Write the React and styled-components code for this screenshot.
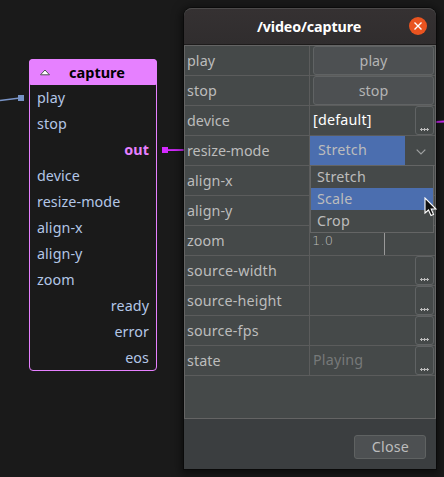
import React from "react";
import styled, { createGlobalStyle } from "styled-components";

const GlobalStyle = createGlobalStyle`
  * { box-sizing: border-box; }
  body {
    margin: 0;
    background: #1a1a1a;
    font-family: "Noto Sans", "Open Sans", sans-serif;
    font-size: 15px;
  }
`;

const Canvas = styled.main`
  position: relative;
  width: 444px;
  height: 477px;
  overflow: hidden;
  background: #1a1a1a;
`;

const Wires = styled.svg`
  position: absolute;
  inset: 0;
`;

const Node = styled.section`
  position: absolute;
  left: 29px;
  top: 59px;
  width: 128px;
  height: 312px;
  border: 1px solid #e680ff;
  border-radius: 4px;
  color: #b3c6e6;
`;

const NodeHeader = styled.header`
  position: relative;
  display: flex;
  align-items: center;
  justify-content: center;
  height: 26px;
  margin: -1px -1px 0;
  padding: 0 0 1px 8px;
  background: #e680ff;
  border-radius: 4px 4px 2px 2px;
  color: #000;
  font-weight: 700;
  font-size: 14.5px;
`;

const Collapse = styled.svg`
  position: absolute;
  left: 10px;
  top: 9px;
`;

const Port = styled.div`
  display: flex;
  align-items: center;
  justify-content: ${(p) => (p.$out ? "flex-end" : "flex-start")};
  height: 26px;
  padding: 0 7px;
  line-height: 26px;
  font-size: 14.3px;
  letter-spacing: 0.08px;
  ${(p) => p.$active && "color: #e680ff; font-weight: 700;"}
`;

const Dialog = styled.section`
  position: absolute;
  left: 184px;
  top: 8px;
  width: 252px;
  height: 461px;
  display: flex;
  flex-direction: column;
  background: #3b3e40;
  border-radius: 8px 8px 0 0;
  box-shadow: 0 2px 10px 3px rgba(0, 0, 0, 0.5), 0 0 0 1px rgba(0, 0, 0, 0.35);
  color: #bcbcbc;
`;

const TitleBar = styled.header`
  position: relative;
  display: flex;
  align-items: center;
  justify-content: center;
  height: 37px;
  flex: none;
  padding-right: 2px;
  background: linear-gradient(#353132, #302d2e);
  border-top: 1px solid #4c4a4a;
  border-bottom: 1px solid #1e1c1c;
  border-radius: 8px 8px 0 0;
  color: #fff;
  font-weight: 700;
  font-size: 14.3px;
  letter-spacing: -0.12px;
`;

const CloseIcon = styled.svg`
  position: absolute;
  right: 9px;
  top: 8px;
`;

const Table = styled.div`
  height: 374px;
  flex: none;
  background: #454949;
  border: 1px solid #646464;
`;

const Row = styled.div`
  display: grid;
  grid-template-columns: 125px 1fr;
  height: 30px;
  border-bottom: 1px solid #5b5c5c;
`;

const Name = styled.div`
  padding-left: 2px;
  border-right: 1px solid #5b5c5c;
  line-height: 29px;
  font-size: 14.3px;
  letter-spacing: ${(p) => p.$spacing}px;
  white-space: nowrap;
`;

const Value = styled.div`
  position: relative;
  display: flex;
  justify-content: space-between;
  padding-right: 1px;
  padding-left: 3px;
  font-size: 14.3px;
  letter-spacing: 0.2px;
  line-height: 27px;
  color: ${(p) => p.$color || "#bcbcbc"};
`;

const PushButton = styled.button`
  flex: 1;
  height: 29px;
  padding: 0 0 3px;
  font: inherit;
  color: #b4b4b4;
  background: #4d5052;
  border: 1px solid #606364;
  border-radius: 3px;
`;

const MoreButton = styled.button`
  display: flex;
  align-items: flex-end;
  justify-content: center;
  width: 19px;
  height: 29px;
  padding: 0 0 3px;
  background: transparent;
  border: 1px solid #606364;
  border-radius: 3px;
`;

const Combo = styled.div`
  display: flex;
  align-items: center;
  justify-content: space-between;
  flex: 1;
  margin-left: -3px;
`;

const Selection = styled.div`
  width: 95px;
  height: 29px;
  padding-left: 8px;
  line-height: 27px;
  background: #4b6eaf;
`;

const Chevron = styled.svg`
  margin: 3px 8px 0 0;
`;

const Menu = styled.div`
  position: absolute;
  z-index: 2;
  left: 0;
  top: 29px;
  width: 124px;
  height: 68px;
  background: #454949;
  border: 1px solid #646565;
`;

const MenuItem = styled.div`
  height: 22px;
  padding-left: 6px;
  line-height: 21px;
  background: ${(p) => (p.$selected ? "#4b6eaf" : "transparent")};
`;

const ZoomField = styled.div`
  width: 73px;
  height: 29px;
  margin-left: -1px;
  border-right: 1px solid #999;
  font-family: "DejaVu Sans", sans-serif;
  font-weight: 200;
  font-size: 13px;
  line-height: 29px;
`;

const Footer = styled.footer`
  display: flex;
  align-items: flex-start;
  justify-content: flex-end;
  padding: 16px 10px 0 0;
`;

const CloseButton = styled.button`
  width: 72px;
  height: 24px;
  padding: 0 0 0 1px;
  font: inherit;
  font-size: 14.3px;
  letter-spacing: 0.2px;
  line-height: 20px;
  color: #bcbcbc;
  background: #4d5052;
  border: 1px solid #5f6262;
  border-radius: 3px;
`;

const Pointer = styled.svg`
  position: absolute;
  z-index: 3;
  left: 424px;
  top: 197px;
`;

const ports = [
  { name: "play" },
  { name: "stop" },
  { name: "out", out: true, active: true },
  { name: "device" },
  { name: "resize-mode" },
  { name: "align-x" },
  { name: "align-y" },
  { name: "zoom" },
  { name: "ready", out: true },
  { name: "error", out: true },
  { name: "eos", out: true },
];

function More() {
  return (
    <MoreButton aria-label="More">
      <svg width="9" height="3" viewBox="0 0 9 3">
        <path d="M0 1.5H9M1.5 0V3M4.5 0V3M7.5 0V3" stroke="#bcbcbc" strokeWidth="1" />
      </svg>
    </MoreButton>
  );
}

function Property({ name, children, color, spacing = 0.08 }) {
  return (
    <Row>
      <Name $spacing={spacing}>{name}</Name>
      <Value $color={color}>{children}</Value>
    </Row>
  );
}

export default function App() {
  return (
    <>
      <GlobalStyle />
      <Canvas>
        <Wires width="444" height="477">
          <path d="M0 100.5L20 98" stroke="#7a95c8" strokeWidth="1.5" />
          <rect x="18" y="95" width="6" height="6" fill="#7592c4" />
          <path d="M165 150.2L184 150M436 122L444 121.5" stroke="#d42aff" strokeWidth="1.8" />
          <rect x="162" y="147" width="6" height="6" fill="#d42aff" />
        </Wires>
        <Node>
          <NodeHeader>
            <Collapse width="12" height="9" viewBox="0 0 12 9">
              <path d="M1.5 6.8H10.5L6 2Z" fill="#fff" stroke="#4f5254" strokeLinejoin="round" />
            </Collapse>
            capture
          </NodeHeader>
          {ports.map((p) => (
            <Port key={p.name} $out={p.out} $active={p.active}>{p.name}</Port>
          ))}
        </Node>
        <Dialog>
          <TitleBar>
            /video/capture
            <CloseIcon width="18" height="18" viewBox="0 0 18 18">
              <circle cx="9" cy="9" r="9" fill="#e95420" />
              <path d="M5.5 5.5L12.5 12.5M12.5 5.5L5.5 12.5" stroke="#fff" strokeWidth="1.4" />
            </CloseIcon>
          </TitleBar>
          <Table>
            <Property name="play"><PushButton>play</PushButton></Property>
            <Property name="stop"><PushButton>stop</PushButton></Property>
            <Property name="device" color="#fff">[default]<More /></Property>
            <Property name="resize-mode" spacing={0}>
              <Combo>
                <Selection>Stretch</Selection>
                <Chevron width="10" height="6" viewBox="0 0 10 6">
                  <path d="M0.7 0.7L5 5L9.3 0.7" fill="none" stroke="#a0a2a2" strokeWidth="1.2" />
                </Chevron>
              </Combo>
              <Menu>
                <MenuItem>Stretch</MenuItem>
                <MenuItem $selected>Scale</MenuItem>
                <MenuItem>Crop</MenuItem>
              </Menu>
            </Property>
            <Property name="align-x" />
            <Property name="align-y" />
            <Property name="zoom"><ZoomField>1.0</ZoomField></Property>
            <Property name="source-width" spacing={0.24}><span /><More /></Property>
            <Property name="source-height" spacing={0.16}><span /><More /></Property>
            <Property name="source-fps" spacing={0.16}><span /><More /></Property>
            <Property name="state" color="#777979">Playing<More /></Property>
          </Table>
          <Footer><CloseButton>Close</CloseButton></Footer>
        </Dialog>
        <Pointer width="13" height="20" viewBox="0 0 13 20">
          <path d="M1 1V16L4.5 13L7 18.5L9.5 17.4L7.2 12H12Z" fill="#111" stroke="#fff" strokeWidth="1.1" />
        </Pointer>
      </Canvas>
    </>
  );
}
